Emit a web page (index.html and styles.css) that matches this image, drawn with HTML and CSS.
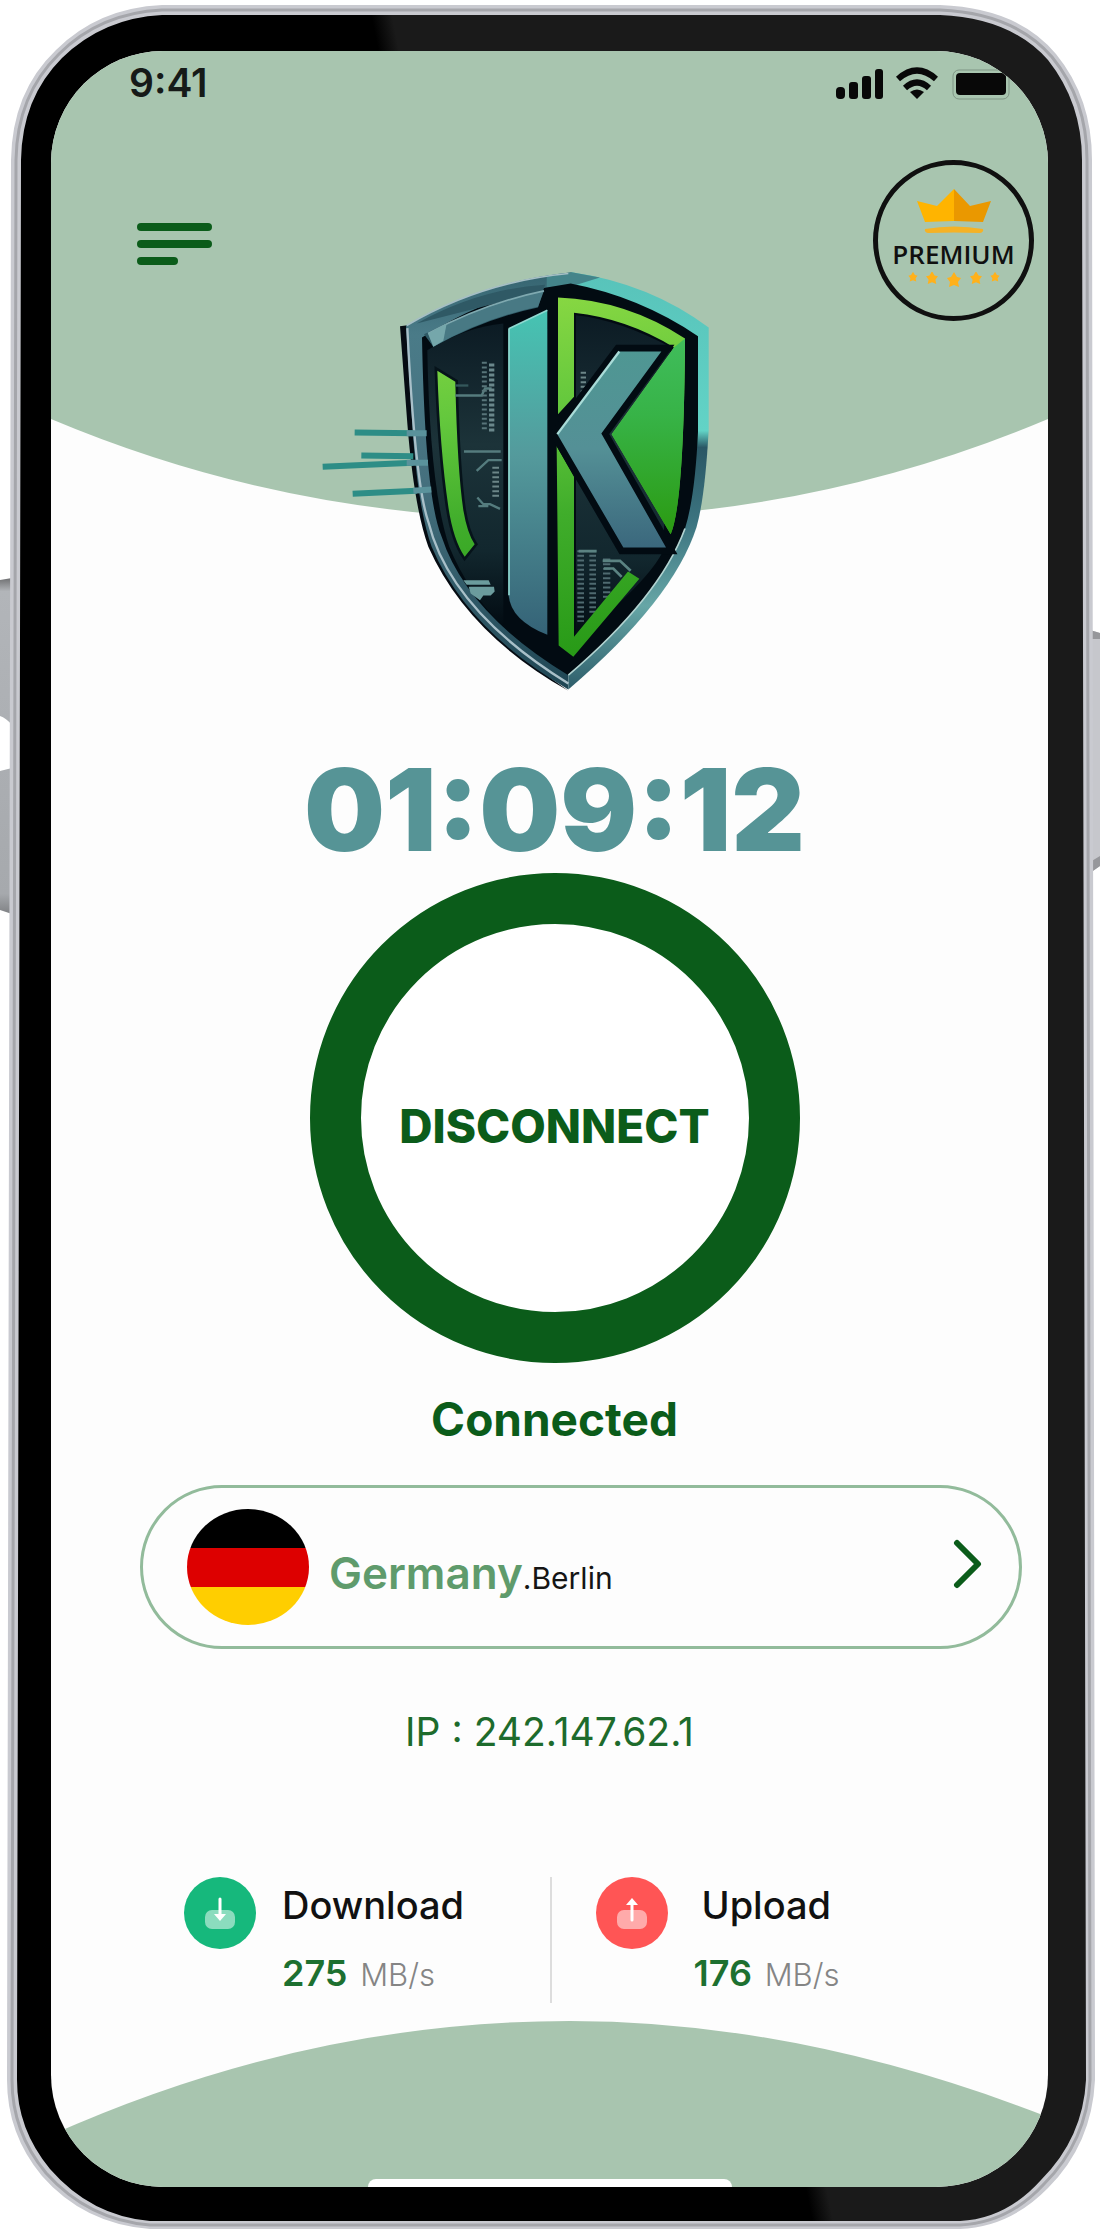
FILE: index.html
```html
<!DOCTYPE html>
<html lang="en">
<head>
<meta charset="utf-8">
<meta name="viewport" content="width=device-width, initial-scale=1">
<title>K VPN</title>
<link rel="stylesheet" href="styles.css">
</head>
<body>
<div class="phone">
  <svg class="frame" viewBox="0 0 1100 2240" preserveAspectRatio="none" aria-hidden="true">
    <defs>
      <linearGradient id="bezel" gradientUnits="userSpaceOnUse" x1="590" y1="1109" x2="610" y2="1105">
        <stop offset="0" stop-color="#000"/><stop offset="1" stop-color="#1a1a1a"/>
      </linearGradient>
      <linearGradient id="key" x1="0" y1="0" x2="0" y2="1">
        <stop offset="0" stop-color="#6f7072"/><stop offset=".04" stop-color="#b2b5b9"/><stop offset=".94" stop-color="#a6a9ad"/><stop offset="1" stop-color="#7f8184"/>
      </linearGradient>
    </defs>
    <path d="M0 580L12 578V725Q6 718 0 716ZM0 771L12 768V914L0 910Z" fill="url(#key)"/>
    <path d="M1090 630L1100 633V866L1090 873Z" fill="#c6c7cc"/>
    <path d="M1090 630L1100 633V639H1090ZM1090 862L1100 856V866L1090 873Z" fill="#96979b"/>
    <path d="M162 5H940Q1018 8 1056 54Q1092 98 1092 160L1095 2080Q1092 2144 1048 2188Q1010 2227 960 2229H150Q84 2224 42 2176Q7 2134 7 2080L11 160Q12 92 56 50Q98 8 162 5Z" fill="#c9cad0"/>
    <path d="M162 10H940Q1014 13 1052 57Q1087 100 1087 160L1090 2080Q1087 2141 1044 2184Q1008 2223 960 2225H150Q88 2220 46 2173Q12 2132 12 2080L16 160Q17 95 59 54Q100 13 162 10Z" fill="none" stroke="#a5a6ab" stroke-width="3"/>
    <path d="M162 15H940Q1011 18 1048 60Q1082 103 1082 160L1086 2080Q1083 2138 1041 2180Q1006 2219 960 2221H150Q91 2216 50 2169Q17 2129 17 2080L21 160Q22 98 62 58Q103 18 162 15Z" fill="url(#bezel)"/>
  </svg>

  <div class="screen">
    <svg class="sky" viewBox="0 0 997 469" preserveAspectRatio="none" aria-hidden="true">
      <path d="M0 0H997V368Q760 468 498 468Q237 468 0 368Z" fill="#a8c5af"/>
    </svg>

    <div class="status">
      <span class="clock">9:41</span>
      <svg class="status-icons" viewBox="0 0 176 34" aria-label="Signal, Wi-Fi and battery">
        <rect x="2" y="21" width="9" height="12" rx="4"/>
        <rect x="15" y="16" width="9" height="17" rx="3"/>
        <rect x="28" y="10" width="9" height="23" rx="3"/>
        <rect x="41" y="3" width="8" height="30" rx="3"/>
        <path d="M64 13Q83-4 102 13M71 22Q83 11 95 22" fill="none" stroke="#080808" stroke-width="6"/>
        <path d="M76 26Q83 21 90 26L83 33Z"/>
        <rect x="119" y="4" width="56" height="29" rx="6" fill="none" stroke="#7f9584" stroke-width="1"/>
        <rect x="122" y="7" width="50" height="22" rx="4"/>
      </svg>
    </div>

    <header class="topbar">
      <button class="menu" type="button" aria-label="Menu"><i></i><i></i><i></i></button>
      <a class="premium" href="#premium">
        <svg class="crown" viewBox="0 0 74 44" aria-hidden="true">
          <path d="M0 12L20 17L37 0V32L8 33Z" fill="#ffb400"/>
          <path d="M37 0L53 17L74 12L66 33L37 32Z" fill="#ea9800"/>
          <path d="M8 40Q37 35 66 40Q67 43 63 44Q37 43 11 44Q7 43 8 40Z" fill="#f5b226"/>
        </svg>
        <span>PREMIUM</span>
        <svg class="stars" viewBox="0 0 92 16" aria-hidden="true">
          <defs><path id="star" d="M0-8L3-3L7-2L4 2L5 7L0 5L-5 7L-4 2L-7-2L-3-3Z"/></defs>
          <g fill="#ffb11b">
            <use href="#star" transform="translate(5 5) scale(.65)"/>
            <use href="#star" transform="translate(24 6) scale(.85)"/>
            <use href="#star" transform="translate(46 8)"/>
            <use href="#star" transform="translate(68 6) scale(.85)"/>
            <use href="#star" transform="translate(87 5) scale(.65)"/>
          </g>
        </svg>
      </a>
    </header>

    <main class="main">
      <svg class="logo" viewBox="60 60 1410 1262" role="img" aria-label="K shield logo">
        <defs>
          <linearGradient id="rimR" x1="0" y1="0" x2="0" y2="1">
            <stop offset="0" stop-color="#58c3ba"/><stop offset=".38" stop-color="#62d3c6"/><stop offset=".42" stop-color="#2a5765"/><stop offset=".6" stop-color="#3c7480"/><stop offset=".8" stop-color="#66a6a6"/><stop offset="1" stop-color="#2d5d6a"/>
          </linearGradient>
          <linearGradient id="rimL" x1="0" y1="0" x2="0" y2="1">
            <stop offset="0" stop-color="#356470"/><stop offset=".15" stop-color="#4a7b88"/><stop offset=".5" stop-color="#45707e"/><stop offset="1" stop-color="#1f4654"/>
          </linearGradient>
          <linearGradient id="dark" x1="0" y1="0" x2="0" y2="1">
            <stop offset="0" stop-color="#0c1b24"/><stop offset=".4" stop-color="#1c3339"/><stop offset=".75" stop-color="#12272e"/><stop offset="1" stop-color="#020b12"/>
          </linearGradient>
          <linearGradient id="teal" gradientUnits="userSpaceOnUse" x1="0" y1="180" x2="0" y2="1150">
            <stop offset="0" stop-color="#46c4b3"/><stop offset=".45" stop-color="#549a9c"/><stop offset="1" stop-color="#356377"/>
          </linearGradient>
          <linearGradient id="chev" gradientUnits="userSpaceOnUse" x1="0" y1="300" x2="0" y2="890">
            <stop offset="0" stop-color="#4f9793"/><stop offset=".5" stop-color="#549096"/><stop offset="1" stop-color="#3b687d"/>
          </linearGradient>
          <linearGradient id="lime" gradientUnits="userSpaceOnUse" x1="780" y1="140" x2="900" y2="1210">
            <stop offset="0" stop-color="#87d742"/><stop offset=".3" stop-color="#64c83d"/><stop offset=".6" stop-color="#40ad2b"/><stop offset="1" stop-color="#289a17"/>
          </linearGradient>
          <linearGradient id="leaf" gradientUnits="userSpaceOnUse" x1="0" y1="260" x2="0" y2="850">
            <stop offset="0" stop-color="#40bd5c"/><stop offset=".4" stop-color="#37b347"/><stop offset="1" stop-color="#2b9b12"/>
          </linearGradient>
        </defs>
        <path d="M300 228L345 222L400 850Q500 1110 805 1322Q500 1150 385 890Q342 770 322 520Z" fill="#050b12"/>
        <path d="M318 226Q540 95 815 66L805 1318Q500 1140 395 890Q355 780 338 540Z" fill="url(#rimL)"/>
        <path d="M815 66Q1050 100 1226 232V540Q1215 740 1190 830Q1120 1050 805 1318Z" fill="url(#rimR)"/>
        <path d="M740 77L815 66L900 82L830 104L740 112Z" fill="#44848a"/>
        <path d="M322 234Q345 700 385 815Q450 1080 805 1300" fill="none" stroke="#a9c0c9" stroke-width="7"/>
        <path d="M320 226Q540 96 805 70" fill="none" stroke="#a6bfc5" stroke-width="5"/>
        <path d="M366 262Q560 140 740 112L812 100Q1020 140 1194 258V545Q1185 740 1155 835Q1080 1040 805 1275Q500 1090 425 860Q375 740 366 262Z" fill="#020b12"/>
        <path d="M805 1275Q1080 1040 1155 835" fill="none" stroke="#b2d3d1" stroke-width="5"/>
        <path d="M382 300Q500 230 610 220V1130Q500 1020 448 890Q390 720 382 300Z" fill="url(#dark)"/>
        <path d="M828 195Q960 210 1110 290L1090 900Q1050 990 828 1170Z" fill="url(#dark)"/>
        <path d="M350 220Q540 115 735 104L714 172Q560 204 400 290L372 252Q530 170 705 130" fill="#2f5965"/>
        <path d="M384 250Q550 160 732 122L714 170Q550 204 400 290Z" fill="#487984"/>
        <path d="M384 250Q550 160 732 122" fill="none" stroke="#7fa9b0" stroke-width="5"/>
        <path d="M384 250L440 220L430 272L400 290Z" fill="#75a7ab"/>
        <path d="M412 362L466 395Q472 660 490 780Q502 850 524 882L494 920Q460 870 445 770Q420 600 412 362Z" fill="url(#lime)" stroke="#06131a" stroke-width="16" paint-order="stroke"/>
        <g fill="none" stroke="#557c7e" stroke-width="7">
          <path d="M466 436H545L555 415H575M492 604H602M605 630H565L530 662M600 776L570 762H550L532 742M565 768H535"/>
          <path d="M466 406H505" stroke="#34575b"/>
        </g>
        <g fill="none" stroke="#6c8688" stroke-dasharray="6 8">
          <path d="M553 335V545" stroke-width="15" stroke="#58757a"/>
          <path d="M575 340V545" stroke-width="16" stroke="#6a878b" stroke-dasharray="9 6"/>
          <path d="M587 650V745" stroke-width="20"/>
          <path d="M850 365V430" stroke-width="16"/>
          <path d="M842 900V1115M878 900V1090" stroke-width="20" stroke="#4f6a70"/>
          <path d="M920 925V1050" stroke-width="22" stroke="#4f6a70"/>
        </g>
        <path d="M836 903H890M908 932H960L992 962M912 955H940L965 980" fill="none" stroke="#5b8382" stroke-width="8"/>
        <path d="M490 990H566L572 1004H500ZM506 1010H582L584 1024L572 1036H550L540 1050L512 1030Z" fill="#6b9c9d"/>
        <path d="M626 236L742 180V1154Q632 1110 626 1035Z" fill="url(#teal)"/>
        <path d="M626 236L742 180M627 236V1035" fill="none" stroke="#8fd9d1" stroke-width="5"/>
        <path d="M774 142Q980 150 1155 265Q1152 760 1112 852L935 552L1122 292Q980 205 822 188V440L774 492Z" fill="url(#lime)"/>
        <path d="M1155 265Q1152 760 1112 852L935 552L1122 292Z" fill="url(#leaf)"/>
        <path d="M770 588L822 680V1160L984 964L1018 986L820 1220L776 1186Z" fill="url(#lime)"/>
        <path d="M958 304H1084L904 550L1098 892H970L772 552Z" fill="url(#chev)" stroke="#020b12" stroke-width="40" paint-order="stroke"/>
        <path d="M958 304L772 552" stroke="#a9dcd8" stroke-width="7" fill="none"/>
        <g fill="none" stroke-width="18">
          <path d="M164 547L340 549M184 616L340 618M68 650L340 638M158 731L350 722" stroke="#2d8d86"/>
          <path d="M320 549H380M320 638H384M340 722L394 718" stroke="#5a929b"/>
        </g>
      </svg>

      <time class="timer">01:09:12</time>
      <button class="ring" type="button">DISCONNECT</button>
      <p class="state">Connected</p>
    </main>

    <button class="server" type="button">
      <svg class="flag" viewBox="0 0 122 116" aria-hidden="true">
        <defs><clipPath id="oval"><ellipse cx="61" cy="58" rx="61" ry="58"/></clipPath></defs>
        <g clip-path="url(#oval)">
          <path d="M0 0H122V39H0Z"/><path d="M0 39H122V78H0Z" fill="#d00"/><path d="M0 78H122V116H0Z" fill="#ffce00"/>
        </g>
      </svg>
      <span class="place"><b>Germany</b>.Berlin</span>
      <svg class="chevron" viewBox="0 0 30 56" aria-hidden="true"><path d="M4 4L25 25L4 46" fill="none" stroke="#0b5c1a" stroke-width="6" stroke-linecap="round" stroke-linejoin="round"/></svg>
    </button>

    <p class="ip">IP : 242.147.62.1</p>

    <section class="stats">
      <div class="stat">
        <svg class="badge" viewBox="0 0 72 72" aria-hidden="true">
          <circle cx="36" cy="36" r="36" fill="#16b87c"/>
          <rect x="21" y="33" width="30" height="19" rx="7" fill="#fff" opacity=".5"/>
          <path d="M36 22V40" stroke="#fff" stroke-width="3" stroke-linecap="round"/><path d="M30 37H42L36 44Z" fill="#fff"/>
        </svg>
        <div class="figures">
          <span class="label">Download</span>
          <span class="speed"><b>275</b> MB/s</span>
        </div>
      </div>
      <div class="stat">
        <svg class="badge" viewBox="0 0 72 72" aria-hidden="true">
          <circle cx="36" cy="36" r="36" fill="#ff5555"/>
          <rect x="21" y="33" width="30" height="19" rx="7" fill="#fff" opacity=".5"/>
          <path d="M36 26V43" stroke="#fff" stroke-width="3" stroke-linecap="round"/><path d="M30 28H42L36 21Z" fill="#fff"/>
        </svg>
        <div class="figures">
          <span class="label upload">Upload</span>
          <span class="speed"><b>176</b> MB/s</span>
        </div>
      </div>
    </section>

    <footer class="ground">
      <svg class="hill" viewBox="0 0 997 166" preserveAspectRatio="none" aria-hidden="true">
        <path d="M0 114Q255 0 519 0Q750 0 997 96V166H0Z" fill="#a8c5af"/>
      </svg>
      <div class="home"></div>
    </footer>
  </div>
</div>
</body>
</html>
```
FILE: styles.css
```css
* { box-sizing: border-box; }

body {
  margin: 0;
  background: #fff;
  color: #0b5c1a;
  font-family: Inter, "Liberation Sans", sans-serif;
}

p { margin: 0; }

button {
  padding: 0;
  border: 0;
  background: none;
  color: inherit;
  font: inherit;
  cursor: pointer;
}

svg { display: block; flex: none; }

.phone {
  position: relative;
  padding: 51px 52px 53px 51px;
}

.frame {
  position: absolute;
  inset: 0;
  width: 100%;
  height: 100%;
}

.screen {
  position: relative;
  display: flex;
  flex-direction: column;
  overflow: hidden;
  border-radius: 112px;
  background: #fdfdfd;
}

.sky {
  position: absolute;
  top: 0;
  left: 0;
  width: 100%;
  height: 469px;
}

.status,
.topbar,
.main { position: relative; }

.status {
  display: flex;
  justify-content: space-between;
  align-items: center;
  height: 64px;
  padding: 0 38px 0 78px;
}

.clock {
  color: #161a18;
  font-size: 39px;
  font-weight: 600;
  line-height: 40px;
}

.status-icons { width: 176px; height: 34px; fill: #080808; }

.topbar {
  display: flex;
  justify-content: space-between;
  align-items: center;
  margin-top: 45px;
  padding: 0 14px 0 86px;
}

.menu {
  display: grid;
  gap: 9px;
  width: 75px;
  padding-top: 6px;
}

.menu i {
  height: 8px;
  border-radius: 4px;
  background: #0b5c1a;
}

.menu i:last-child { width: 41px; }

.premium {
  display: flex;
  flex-direction: column;
  align-items: center;
  width: 161px;
  height: 161px;
  padding-top: 24px;
  border: 5px solid #101010;
  border-radius: 50%;
  color: #101010;
  font: 600 26px/28px "Open Sans", sans-serif;
  text-decoration: none;
}

.crown { width: 74px; height: 44px; margin-bottom: 7px; }
.stars { width: 92px; height: 16px; margin-top: 4px; }

.main {
  display: flex;
  flex-direction: column;
  align-items: center;
  margin-top: -51px;
  padding-left: 10px;
}

.logo { width: 470px; height: 421px; }

.timer {
  margin-top: 63px;
  color: #569496;
  font-size: 114px;
  font-weight: 900;
  line-height: 112px;
}

.ring {
  width: 490px;
  height: 490px;
  margin-top: 7px;
  padding-top: 16px;
  border: 51px solid #0b5c1a;
  border-radius: 50%;
  background: #fff;
  font-size: 46px;
  font-weight: 800;
}

.state {
  margin-top: 32px;
  font-size: 46px;
  font-weight: 700;
  line-height: 48px;
}

.server {
  display: flex;
  align-items: center;
  height: 164px;
  margin: 42px 26px 0 89px;
  padding: 0 36px 0 44px;
  border: 3px solid #92bb9b;
  border-radius: 82px;
  text-align: left;
}

.flag { width: 122px; height: 116px; }

.place {
  flex: 1;
  padding: 16px 0 0 20px;
  color: #151515;
  font-size: 30px;
  line-height: 48px;
}

.place b { color: #5f9b6c; font-size: 44px; font-weight: 600; }

.chevron { width: 30px; height: 56px; }

.ip {
  margin-top: 59px;
  font-size: 39px;
  line-height: 48px;
  text-align: center;
  color: #1d6b2c;
}

.stats {
  display: grid;
  grid-template-columns: 1fr 1fr;
  margin-top: 121px;
  padding-left: 4px;
}

.stat { display: flex; gap: 26px; height: 126px; padding-left: 44px; }
.stat:first-child { padding-left: 129px; border-right: 2px solid #ddd; }

.badge { width: 72px; height: 72px; }

.figures { display: flex; flex-direction: column; gap: 28px; padding-top: 8px; }

.label { color: #111; font-size: 38px; font-weight: 500; line-height: 40px; }
.upload { padding-left: 8px; }

.speed { color: #858585; font-size: 31px; font-weight: 300; line-height: 40px; }
.speed b { margin-right: 4px; color: #1d7030; font-size: 36px; font-weight: 600; }

.ground {
  display: grid;
  height: 166px;
  margin-top: 18px;
}

.hill,
.home { grid-area: 1 / 1; }

.hill { width: 100%; height: 100%; }

.home {
  place-self: end center;
  width: 364px;
  height: 8px;
  border-radius: 8px 8px 0 0;
  background: #fff;
}
```
